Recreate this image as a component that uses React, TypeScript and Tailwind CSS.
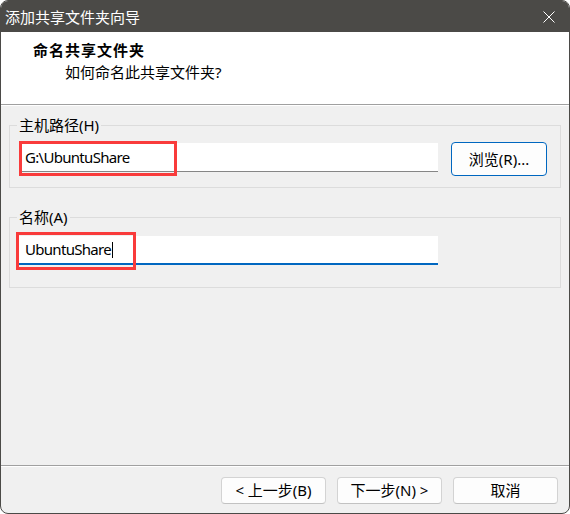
import React from "react";

const FONT = "font-['Noto_Sans','Noto_Sans_CJK_SC',sans-serif]";

function Btn({ children, className = "" }: { children: React.ReactNode; className?: string }) {
  return (
    <div
      className={`flex items-center justify-center rounded-[4px] border border-[#d3d3d3] border-b-[#c2c2c2] bg-[#fdfdfd] text-[15px] text-black ${className}`}
    >
      {children}
    </div>
  );
}

export default function App() {
  return (
    <div className={`w-[570px] h-[514px] bg-white ${FONT}`}>
      <div className="relative w-full h-full flex flex-col rounded-[8px] overflow-hidden border border-[#4b4a47] bg-[#f0f0f0]">
        {/* Title bar */}
        <div className="h-[31px] shrink-0 bg-[#4b4a47] flex items-center justify-between pl-[4px] pr-[14px]">
          <span className="text-[15px] leading-[20px] text-white">添加共享文件夹向导</span>
          <svg width="12" height="12" viewBox="0 0 12 12" className="mt-[1px]">
            <path d="M0.5 0.5 L11.5 11.5 M11.5 0.5 L0.5 11.5" stroke="#ffffff" strokeWidth="1" fill="none" />
          </svg>
        </div>

        {/* Header */}
        <div className="h-[72px] shrink-0 bg-white pl-[32px] pt-[8px] flex flex-col gap-[2px]">
          <div className="text-[15px] leading-[20px] font-bold text-black tracking-[1px]">命名共享文件夹</div>
          <div className="text-[15px] leading-[20px] text-black pl-[32px]">如何命名此共享文件夹?</div>
        </div>
        <div className="h-px shrink-0 bg-[#a0a0a0]" />
        <div className="h-px shrink-0 bg-white" />

        {/* Body */}
        <div className="flex-1 flex flex-col px-[8px] pt-[19px]">
          {/* Group 1 */}
          <div className="relative h-[63px] border border-[#dcdcdc] pl-[9px] pt-[17px] flex items-start">
            <span className="absolute left-[7px] top-[-11px] px-[2px] bg-[#f0f0f0] text-[15px] leading-[20px] text-black">
              主机路径(H)
            </span>
            <div className="w-[419px] h-[29px] bg-white border-b border-[#868686] flex items-center pl-[6px] text-[15px] text-black tracking-[-0.7px]">
              G:\UbuntuShare
            </div>
            <Btn className="ml-[13px] mt-[-1px] w-[96px] h-[34px] !border-[#0067c0]">浏览(R)...</Btn>
          </div>

          {/* Group 2 */}
          <div className="relative mt-[29px] h-[71px] border border-[#dcdcdc] pl-[9px] pt-[18px] flex items-start">
            <span className="absolute left-[7px] top-[-11px] px-[2px] bg-[#f0f0f0] text-[15px] leading-[20px] text-black">
              名称(A)
            </span>
            <div className="w-[419px] h-[29px] bg-white border-b-2 border-[#0067c0] flex items-center pl-[6px] text-[15px] text-black">
              <span className="tracking-[-0.7px]">UbuntuShare</span>
              <span className="inline-block w-px h-[16px] bg-black ml-[1px]" />
            </div>
          </div>
        </div>

        {/* Footer */}
        <div className="h-px shrink-0 bg-[#a0a0a0]" />
        <div className="h-px shrink-0 bg-white" />
        <div className="h-[46px] shrink-0 flex justify-end items-start gap-[11px] pt-[10px] pr-[11px]">
          <Btn className="w-[105px] h-[27px]">&lt; 上一步(B)</Btn>
          <Btn className="w-[105px] h-[27px]">下一步(N) &gt;</Btn>
          <Btn className="w-[105px] h-[27px]">取消</Btn>
        </div>

        {/* Red annotation boxes */}
        <div className="absolute left-[18px] top-[140px] w-[158px] h-[35px] border-[3px] border-[#f93b3b]" />
        <div className="absolute left-[15px] top-[231px] w-[120px] h-[38px] border-[3px] border-[#f93b3b]" />
      </div>
    </div>
  );
}
